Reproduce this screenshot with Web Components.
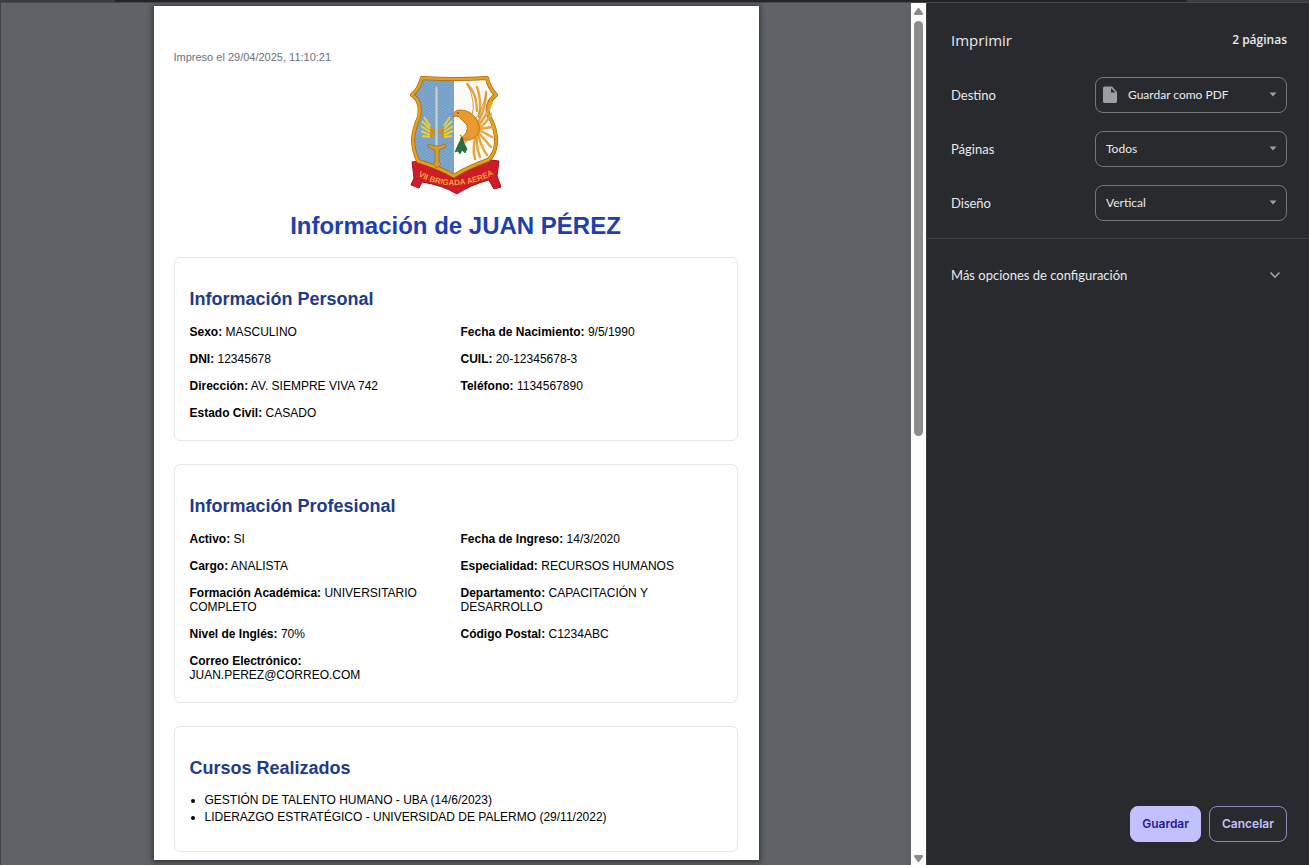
<!DOCTYPE html>
<html lang="es">
<head>
<meta charset="utf-8">
<title>Imprimir</title>
<style>
  html, body { margin: 0; height: 100%; overflow: hidden; background: #292a2d; }
  body { font-family: "Liberation Sans", Arial, sans-serif; }
</style>
</head>
<body>
<print-dialog>
  <preview-pane slot="preview">
    <print-sheet>
      <span slot="stamp">Impreso el 29/04/2025, 11:10:21</span>
      <brigade-crest slot="crest"></brigade-crest>
      <span slot="title">Información de JUAN PÉREZ</span>
      <info-card heading="Información Personal">
        <info-grid>
          <info-field label="Sexo">MASCULINO</info-field>
          <info-field label="Fecha de Nacimiento">9/5/1990</info-field>
          <info-field label="DNI">12345678</info-field>
          <info-field label="CUIL">20-12345678-3</info-field>
          <info-field label="Dirección">AV. SIEMPRE VIVA 742</info-field>
          <info-field label="Teléfono">1134567890</info-field>
          <info-field label="Estado Civil">CASADO</info-field>
        </info-grid>
      </info-card>
      <info-card heading="Información Profesional">
        <info-grid>
          <info-field label="Activo">SI</info-field>
          <info-field label="Fecha de Ingreso">14/3/2020</info-field>
          <info-field label="Cargo">ANALISTA</info-field>
          <info-field label="Especialidad">RECURSOS HUMANOS</info-field>
          <info-field label="Formación Académica">UNIVERSITARIO COMPLETO</info-field>
          <info-field label="Departamento">CAPACITACIÓN Y DESARROLLO</info-field>
          <info-field label="Nivel de Inglés">70%</info-field>
          <info-field label="Código Postal">C1234ABC</info-field>
          <info-field label="Correo Electrónico">JUAN.PEREZ@CORREO.COM</info-field>
        </info-grid>
      </info-card>
      <info-card heading="Cursos Realizados">
        <course-list items="GESTIÓN DE TALENTO HUMANO - UBA (14/6/2023)|LIDERAZGO ESTRATÉGICO - UNIVERSIDAD DE PALERMO (29/11/2022)"></course-list>
      </info-card>
    </print-sheet>
  </preview-pane>
  <settings-panel slot="settings">
    <setting-row label="Destino" value="Guardar como PDF" icon></setting-row>
    <setting-row label="Páginas" value="Todos"></setting-row>
    <setting-row label="Diseño" value="Vertical"></setting-row>
  </settings-panel>
</print-dialog>

<script>
const define = (name, render) => customElements.define(name, class extends HTMLElement {
  connectedCallback() {
    if (this.shadowRoot) return;
    const template = document.createElement('template');
    template.innerHTML = render(this);
    this.attachShadow({ mode: 'open' }).append(template.content.cloneNode(true));
  }
});

define('print-dialog', () => `
  <style>
    :host { display: flex; flex-direction: column; height: 100vh; }
    .strip { display: flex; flex: none; height: 2px; background: #232428; border-bottom: 1px solid #47484c; }
    .strip i { width: 115px; background: #3c3b40; }
    .strip i:last-child { margin-left: auto; width: 122px; }
    .body { flex: 1; min-height: 0; display: grid; grid-template-columns: minmax(0, 1fr) 383px; }
  </style>
  <div class="strip"><i></i><i></i></div>
  <div class="body"><slot name="preview"></slot><slot name="settings"></slot></div>`);

define('preview-pane', () => `
  <style>
    :host { display: flex; min-width: 0; min-height: 0; background: #5f6368; border-left: 1px solid #434448; }
    .view { flex: 1; min-width: 0; overflow: hidden; padding-top: 3px; }
    .bar { flex: none; width: 15px; background: #fcfcfc; display: flex; flex-direction: column; align-items: center; }
    svg { display: block; width: 15px; height: 14px; fill: #8b8b8b; }
    .track { flex: 1; width: 9px; padding: 4px 0 0; }
    .thumb { height: 50%; border-radius: 5px; background: #8b8b8b; }
  </style>
  <div class="view"><slot></slot></div>
  <div class="bar">
    <svg viewBox="0 0 15 14"><path d="M8.500 5.500 12 10.500q.5 1.500-1 1.500H4q-1.500 0-1-1.500L6.500 5.500q1-1 2 0z"/></svg>
    <div class="track"><div class="thumb"></div></div>
    <svg viewBox="0 0 15 14"><path d="M8.500 10.500 12 5.500q.5-1.500-1-1.500H4q-1.500 0-1 1.500l3.500 5q1 1 2 0z"/></svg>
  </div>`);

define('print-sheet', () => `
  <style>
    :host { display: block; box-sizing: border-box; width: 605px; margin: 0 auto; padding: 44px 21px 8px 20px; background: #fff; color: #000; box-shadow: 0 1px 5px 2px #00000066; }
    .stamp { margin: 0; font-size: 11px; line-height: 14px; color: #6b7280; }
    .crest { display: flex; justify-content: center; margin-top: 11px; }
    h1 { margin: 16px 0; font-size: 24px; line-height: 30px; text-align: center; color: #1e40af; }
    .cards { display: grid; gap: 23px; }
  </style>
  <p class="stamp"><slot name="stamp"></slot></p>
  <div class="crest"><slot name="crest"></slot></div>
  <h1><slot name="title"></slot></h1>
  <div class="cards"><slot></slot></div>`);

define('brigade-crest', () => `
  <style>
    :host { display: block; width: 92px; height: 120px; }
    svg { display: block; width: 100%; height: 100%; overflow: visible; }
    text { font: 700 8px "Liberation Sans", Arial, sans-serif; fill: #f0a232; }
  </style>
  <svg viewBox="0 0 92 120" role="img" aria-label="Escudo">
    <defs>
      <clipPath id="shield"><path d="M12 3Q45 5 77 3 79 13 86 20 76 27 78 39 87 54 86 68 85 80 78 85 56 93 44 101 28 92 8 86 3 75 3 64 4 53 9 42 12 26 2 20 9 14 12 3Z"/></clipPath>
      <pattern id="weave" width="4" height="3" patternUnits="userSpaceOnUse"><path d="M0 3 4 0" stroke="#5f8cba" stroke-width=".6"/></pattern>
      <path id="arc" d="M8 101Q46 121 86 98"/>
    </defs>
    <path d="M2 87 8 86 44 101 80 85 89 86 87 101 91 112 84 114 81 109 79 105Q60 110 47 119 32 110 12 107L9 113 1 110 4 103Z" fill="#cf1c29" stroke="#9f1422"/>
    <g clip-path="url(#shield)">
      <path fill="#7fa8ce" d="M0 0H44V110H0z"/><path fill="url(#weave)" d="M0 0H44V110H0z"/>
      <path fill="#fafafa" d="M44 0H92V110H44z"/>
    </g>
    <g fill="none" stroke-linejoin="round">
      <path d="M12 3Q45 5 77 3 79 13 86 20 76 27 78 39 87 54 86 68 85 80 78 85 56 93 44 101 28 92 8 86 3 75 3 64 4 53 9 42 12 26 2 20 9 14 12 3Z" stroke="#a9680b" stroke-width="4"/>
      <path d="M12 3Q45 5 77 3 79 13 86 20 76 27 78 39 87 54 86 68 85 80 78 85 56 93 44 101 28 92 8 86 3 75 3 64 4 53 9 42 12 26 2 20 9 14 12 3Z" stroke="#e7a01b" stroke-width="2.600"/>
    </g>
    <path d="M21 52V63M21 57H33M33 52V63" fill="none" stroke="#c98f2a" stroke-width="4"/>
    <path d="M20 51 14 42M20 54 12 46M20 57 11 51M20 60 11 56M20 62 12 61M34 51 40 42M34 54 42 46M34 57 43 51M34 60 43 56M34 62 42 61" stroke="#ebd02e" stroke-width="2"/>
    <path d="m25 13 1.500-3 1.500 3v59h-3z" fill="#c3cdd5" stroke="#8597a6" stroke-width=".6"/>
    <path d="M18 69q9 4 17 0l1 3-7 3v12l2 2-4 4-4-4 2-2V75l-7-3z" fill="#d7a02d" stroke="#9f702b" stroke-width=".8"/>
    <g fill="none" stroke="#e9a43a" stroke-linecap="round" stroke-width="2.400">
      <path d="M57 9Q67 18 67 36M67 12Q72 25 69 42M76 17Q76 32 68 48M82 27Q77 40 69 50M81 39Q76 49 69 53"/>
      <path d="M69 55 82 62M68 57Q74 64 81 72M68 59Q71 72 77 80M67 60Q66 72 70 82M66 60Q62 73 65 84M82 52 70 54"/>
    </g>
    <path d="M43 42Q43 35 50 35 61 35 67 45 73 58 64 63 58 67 50 64 59 58 57 50L49 42 46 41Z" fill="#e99b2e" stroke="#bd7518"/>
    <path d="M62 40Q66 28 58 10M65 45Q71 37 76 20" fill="none" stroke="#c98420" stroke-width=".8"/>
    <path d="M59 63 53 63 50 60M59 64 54 68" fill="none" stroke="#d98c22" stroke-width="1.500"/>
    <path d="m52 62 2 6 3 6-2 4-3-3-2 4-2-3-3 1 3-7z" fill="#26713e" stroke="#164c33" stroke-width=".6"/>
    <circle cx="48" cy="38" r=".8" fill="#5d3213"/>
    <text><textPath href="#arc">VII BRIGADA AEREA</textPath></text>
  </svg>`);

define('info-card', el => `
  <style>
    :host { display: block; border: 1px solid #e5e7eb; border-radius: 6px; padding: 30px 15px 20px; }
    h2 { margin: 0 0 13px; font-size: 18px; line-height: 22px; color: #1e3a8a; }
  </style>
  <h2>${el.getAttribute('heading')}</h2>
  <slot></slot>`);

define('info-grid', () => `
  <style>
    :host { display: grid; grid-template-columns: 1fr 1fr; gap: 13px 10px; padding-top: 2px; font-size: 12px; line-height: 14px; }
  </style>
  <slot></slot>`);

define('info-field', el => `
  <style>:host { display: block; }</style>
  <strong>${el.getAttribute('label')}:</strong> <slot></slot>`);

define('course-list', el => `
  <style>
    :host { display: block; padding-bottom: 5px; }
    ul { margin: 0; padding-left: 15px; font-size: 12px; line-height: 17px; }
  </style>
  <ul>${el.getAttribute('items').split('|').map(t => `<li>${t}</li>`).join('')}</ul>`);

define('settings-panel', () => `
  <style>
    :host { display: flex; flex-direction: column; min-height: 0; box-sizing: border-box; border-left: 1px solid #3c3d41; background: #292a2d; color: #e8eaed; font: 13px/20px Lato, "Open Sans", sans-serif; }
    header { display: flex; justify-content: space-between; align-items: center; padding: 24px 22px 20px 24px; }
    h2 { margin: 0; font: 400 15px/26px "Open Sans", sans-serif; }
    .count { font: 600 12px/20px "Open Sans", sans-serif; }
    .rows { display: grid; gap: 18px; padding: 4px 22px 17px 24px; border-bottom: 1px solid #3f4043; }
    .more { display: flex; justify-content: space-between; align-items: center; padding: 26px 28px 26px 24px; border: 0; background: none; color: inherit; font: inherit; text-align: left; }
    .more svg { width: 12px; height: 12px; }
    footer { display: flex; justify-content: flex-end; gap: 8px; margin-top: auto; padding: 0 22px 23px; }
    footer button { box-sizing: border-box; height: 36px; padding: 0 12px; border: 1px solid #8e8cbd; border-radius: 8px; background: none; color: #c2c1ff; font: 600 12px/20px Inter, sans-serif; }
    footer .save { background: #c2c1ff; border-color: #c2c1ff; color: #2a1a8a; padding: 0 11px; }
  </style>
  <header><h2>Imprimir</h2><span class="count">2 páginas</span></header>
  <div class="rows"><slot></slot></div>
  <button class="more" type="button">Más opciones de configuración
    <svg viewBox="0 0 12 12" fill="none" stroke="#9aa0a6" stroke-width="1.600"><path d="m1.500 3.500 4.500 4.500 4.500-4.500"/></svg>
  </button>
  <footer><button class="save" type="button">Guardar</button><button type="button">Cancelar</button></footer>`);

define('setting-row', el => `
  <style>
    :host { display: grid; grid-template-columns: 1fr 192px; align-items: center; }
    .box { position: relative; display: grid; }
    select { appearance: none; box-sizing: border-box; width: 100%; height: 36px; margin: 0; padding: 0 24px 0 10px; border: 1px solid #76777a; border-radius: 8px; background: transparent; color: #e8eaed; font: 12px/20px Lato, "Open Sans", sans-serif; }
    .with-icon select { padding-left: 32px; }
    .doc { position: absolute; left: 8px; top: 9px; width: 14px; height: 18px; }
    .arrow { position: absolute; right: 10px; top: 15px; width: 8px; height: 5px; }
  </style>
  <label for="choice">${el.getAttribute('label')}</label>
  <div class="box ${el.hasAttribute('icon') ? 'with-icon' : ''}">
    <select id="choice"><option>${el.getAttribute('value')}</option></select>
    ${el.hasAttribute('icon') ? '<svg class="doc" viewBox="0 0 14 18"><path fill="#9aa0a6" fill-rule="evenodd" d="M2 .5h7L14 6v9.500a1.500 1.500 0 0 1-1.500 1.500h-11A1.500 1.500 0 0 1 0 15.500V2A1.500 1.500 0 0 1 1.500.5zM8 2v4.500h4.500z"/></svg>' : ''}
    <svg class="arrow" viewBox="0 0 8 5"><path fill="#9aa0a6" d="M.5.5h7L4 4.500z"/></svg>
  </div>`);
</script>
</body>
</html>
